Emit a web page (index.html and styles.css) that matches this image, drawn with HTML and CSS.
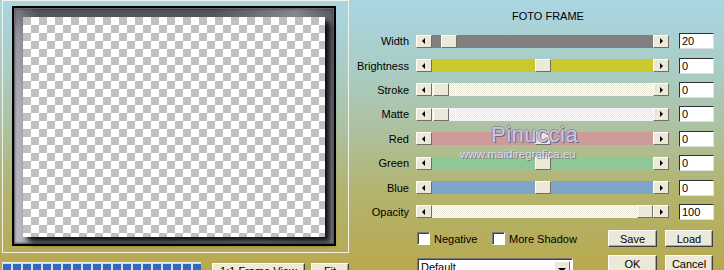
FILE: index.html
```html
<!DOCTYPE html>
<html lang="en">
  <head>
    <meta charset="UTF-8" />
    <title>Foto Frame</title>
    <link rel="stylesheet" href="styles.css">
  </head>
  <body>
    <div class="app">
      <div class="preview-col">
        <div class="preview">
          <div class="frame">
            <div class="canvas"></div>
          </div>
        </div>
        <div class="status">
          <div class="progress">
            <span></span><span></span><span></span><span></span><span></span>
            <span></span><span></span><span></span><span></span><span></span>
            <span></span><span></span><span></span><span></span><span></span>
            <span></span><span></span><span></span><span></span><span></span>
          </div>
          <button class="btn view-btn">1:1 Frame View</button>
          <button class="btn fit-btn">Fit</button>
        </div>
      </div>

      <div class="controls">
        <div class="title">FOTO FRAME</div>

        <div class="row">
          <label>Width</label>
          <div class="slider">
            <span class="arrow left"></span>
            <div class="track gray"><span class="thumb" style="margin-left: 9px"></span></div>
            <span class="arrow right"></span>
          </div>
          <input class="value" type="text" value="20" />
        </div>
        <div class="row">
          <label>Brightness</label>
          <div class="slider">
            <span class="arrow left"></span>
            <div class="track yellow"><span class="thumb" style="margin-left: 103px"></span></div>
            <span class="arrow right"></span>
          </div>
          <input class="value" type="text" value="0" />
        </div>
        <div class="row">
          <label>Stroke</label>
          <div class="slider">
            <span class="arrow left"></span>
            <div class="track plain"><span class="thumb" style="margin-left: 1px"></span></div>
            <span class="arrow right"></span>
          </div>
          <input class="value" type="text" value="0" />
        </div>
        <div class="row">
          <label>Matte</label>
          <div class="slider">
            <span class="arrow left"></span>
            <div class="track plain"><span class="thumb" style="margin-left: 1px"></span></div>
            <span class="arrow right"></span>
          </div>
          <input class="value" type="text" value="0" />
        </div>
        <div class="row">
          <label>Red</label>
          <div class="slider">
            <span class="arrow left"></span>
            <div class="track red"><span class="thumb" style="margin-left: 103px"></span></div>
            <span class="arrow right"></span>
          </div>
          <input class="value" type="text" value="0" />
        </div>
        <div class="row">
          <label>Green</label>
          <div class="slider">
            <span class="arrow left"></span>
            <div class="track green"><span class="thumb" style="margin-left: 103px"></span></div>
            <span class="arrow right"></span>
          </div>
          <input class="value" type="text" value="0" />
        </div>
        <div class="row">
          <label>Blue</label>
          <div class="slider">
            <span class="arrow left"></span>
            <div class="track blue"><span class="thumb" style="margin-left: 103px"></span></div>
            <span class="arrow right"></span>
          </div>
          <input class="value" type="text" value="0" />
        </div>
        <div class="row">
          <label>Opacity</label>
          <div class="slider">
            <span class="arrow left"></span>
            <div class="track plain"><span class="thumb" style="margin-left: 205px"></span></div>
            <span class="arrow right"></span>
          </div>
          <input class="value" type="text" value="100" />
        </div>

        <div class="bottom">
          <div class="options">
            <div class="checks">
              <div class="check first"><span class="box"></span>Negative</div>
              <div class="check"><span class="box"></span>More Shadow</div>
            </div>
            <div class="select">
              <span class="select-text">Default</span>
              <span class="select-btn"></span>
            </div>
          </div>
          <div class="buttons">
            <button class="btn">Save</button>
            <button class="btn">Load</button>
            <button class="btn">OK</button>
            <button class="btn">Cancel</button>
          </div>
        </div>

        <div class="mark-name">Pinuccia</div>
        <div class="mark-url">www.maidiregrafica.eu</div>
      </div>
    </div>
  </body>
</html>
```

FILE: styles.css
```css
body {
  margin: 0;
  width: 724px;
  height: 270px;
  overflow: hidden;
  background: linear-gradient(#a9d6e2 0%, #a9cdc6 25%, #adc1a0 48%, #b3b470 70%, #b8a94e 100%);
  font-family: "Liberation Sans", Arial, sans-serif;
  font-size: 11px;
  color: #000;
}
.app {
  display: flex;
}
.preview-col {
  width: 350px;
}
.preview {
  margin-left: 2px;
  width: 347px;
  height: 253px;
  box-sizing: border-box;
  border: 1px solid #f2f2ea;
  padding: 5px 0 0 9px;
}
.frame {
  width: 324px;
  height: 240px;
  box-sizing: border-box;
  border: 2px solid #000;
  padding: 9px 0 0 9px;
  background:
    linear-gradient(100deg, rgba(255, 255, 255, 0) 55%, rgba(255, 255, 255, 0.3) 78%, rgba(255, 255, 255, 0) 90%),
    linear-gradient(to right, rgba(255, 255, 255, 0.25), rgba(255, 255, 255, 0) 8%),
    linear-gradient(#4a4a54 0%, #7a7a88 12%, #9a9aaa 45%, #a6a6b4 100%);
  box-shadow: inset 0 0 0 1px #6a6a70, inset 0 0 3px #000;
}
.canvas {
  width: 302px;
  height: 220px;
  background-color: #fff;
  background-image: conic-gradient(#fff 25%, #c0c0c0 0 50%, #fff 0 75%, #c0c0c0 0);
  background-size: 16px 16px;
  box-shadow: 4px 4px 5px rgba(0, 0, 0, 0.85), 8px 8px 5px rgba(0, 0, 0, 0.4);
}
.status {
  display: flex;
  align-items: flex-start;
  margin-top: 9px;
}
.progress {
  margin-left: 2px;
  width: 199px;
  height: 14px;
  box-sizing: border-box;
  border-top: 1px solid #f0f0f0;
  padding: 1px 0 0 1px;
  display: flex;
  gap: 2px;
  overflow: hidden;
  background: #d8dde8;
}
.progress span {
  flex: none;
  width: 8px;
  height: 12px;
  background: #316ac5;
}
.btn {
  font: inherit;
  color: #000;
  background: #ece9d8;
  border: 1px solid;
  border-color: #fff #404040 #404040 #fff;
  box-shadow: inset -1px -1px #aca899;
  padding: 0;
  height: 17px;
}
.view-btn {
  margin-left: 11px;
  margin-top: 1px;
  width: 93px;
  height: 20px;
  padding-bottom: 5px;
}
.fit-btn {
  margin-left: 6px;
  margin-top: 1px;
  width: 38px;
  height: 20px;
  padding-bottom: 5px;
}

/* right side */
.controls {
  position: relative;
  width: 374px;
}
.title {
  margin-left: 66px;
  width: 264px;
  text-align: center;
  padding-top: 10px;
  height: 19px;
  line-height: 13px;
}
.row {
  display: flex;
  align-items: center;
  height: 24.4px;
}
.row label {
  width: 59px;
  margin-right: 7px;
  text-align: right;
}
.slider {
  display: flex;
  width: 253px;
  height: 13px;
}
.arrow,
.thumb {
  flex: none;
  width: 16px;
  height: 13px;
  box-sizing: border-box;
  background: #ece9d8;
  border: 1px solid;
  border-color: #fff #716f64 #716f64 #fff;
  display: flex;
  align-items: center;
  justify-content: center;
}
.arrow::before {
  content: "";
  border: 3px solid transparent;
}
.arrow.left::before {
  border-right-color: #000;
  margin-left: -4px;
}
.arrow.right::before {
  border-left-color: #000;
  margin-right: -4px;
}
.track {
  flex: 1;
  display: flex;
}
.track.gray {
  background: #808080;
}
.track.yellow {
  background: #cbc82c;
}
.track.red {
  background: #cf9a9a;
}
.track.green {
  background: #8fc797;
}
.track.blue {
  background: #7ea6c9;
}
.track.plain {
  background-color: #fff;
  background-image: conic-gradient(#e8e5d6 25%, #fff 0 50%, #e8e5d6 0 75%, #fff 0);
  background-size: 2px 2px;
}
.value {
  margin-left: 10px;
  width: 35px;
  height: 16px;
  box-sizing: border-box;
  border: 1px solid;
  border-color: #303030 #e0e0e0 #e0e0e0 #303030;
  padding: 0 0 0 2px;
  font: inherit;
  background: #fff;
  outline: none;
}
.bottom {
  display: flex;
  margin-left: 67px;
  padding-top: 6px;
}
.options {
  width: 191px;
}
.checks {
  display: flex;
  align-items: center;
  height: 17px;
}
.check {
  display: flex;
  align-items: center;
  gap: 4px;
}
.check.first {
  width: 75px;
}
.box {
  width: 13px;
  height: 13px;
  box-sizing: border-box;
  background: #fff;
  border: 1px solid;
  border-color: #7a7a7a #fff #fff #7a7a7a;
  box-shadow: inset 1px 1px #404040;
}
.select {
  margin-top: 11px;
  width: 156px;
  height: 20px;
  box-sizing: border-box;
  display: flex;
  background: #fff;
  border: 1px solid;
  border-color: #7a7a7a #fff #fff #7a7a7a;
  box-shadow: inset 1px 1px #404040;
}
.select-text {
  flex: 1;
  padding: 2px 0 0 3px;
}
.select-btn {
  width: 16px;
  margin: 2px 2px 0 0;
  background: #ece9d8;
  border: 1px solid;
  border-color: #fff #716f64 #716f64 #fff;
  display: flex;
  justify-content: center;
  padding-top: 6px;
  box-sizing: border-box;
}
.select-btn::before {
  content: "";
  border: 4px solid transparent;
  border-top: 4px solid #000;
  border-bottom: 0;
}
.buttons {
  display: grid;
  grid-template-columns: 49px 48px;
  grid-auto-rows: 17px;
  gap: 8px;
}
.buttons .btn {
  height: 17px;
}
.buttons .btn:nth-child(n + 3) {
  height: 20px;
  padding-bottom: 3px;
}

/* watermark over the sliders */
.mark-name {
  position: absolute;
  left: 141px;
  top: 122px;
  font-size: 22px;
  letter-spacing: 0.5px;
  color: #cdc7e6;
  text-shadow: 1px 1px 0 #6f6a8c, -1px 0 0 #8e88a8, 0 -1px 0 #8e88a8;
}
.mark-url {
  position: absolute;
  left: 110px;
  top: 148px;
  font-size: 11.5px;
  color: #dcd8f2;
  text-shadow: 1px 1px 0 #7c7890;
}
```
